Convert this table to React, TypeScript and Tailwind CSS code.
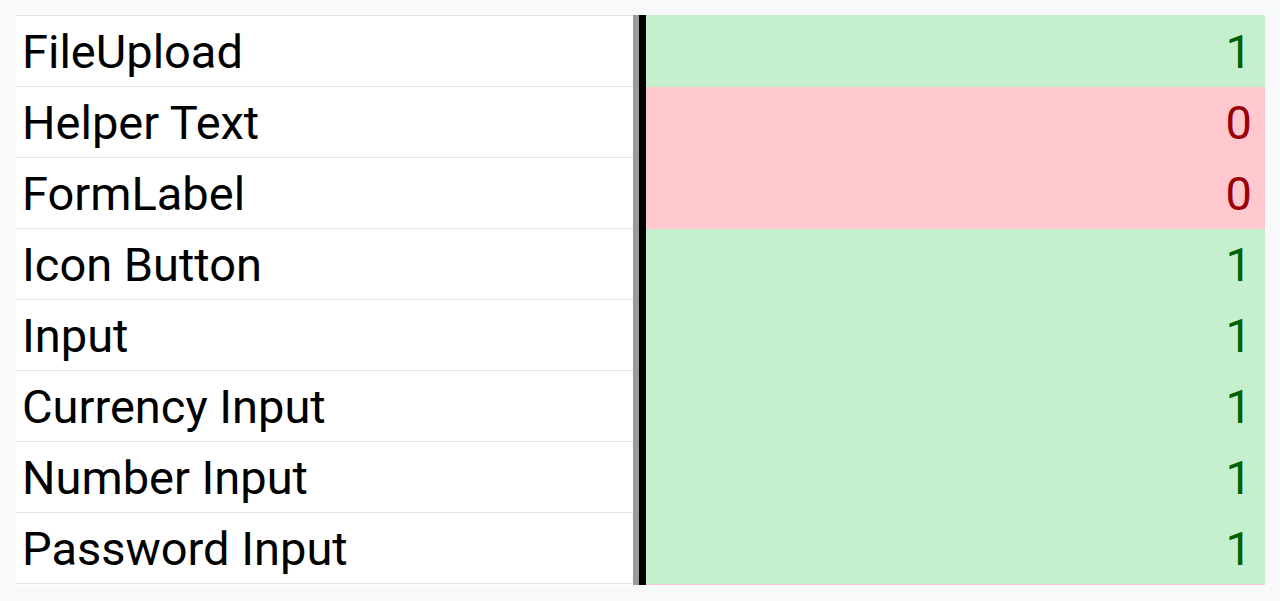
import React from "react";

const rows = [
  { name: "FileUpload", value: 1 },
  { name: "Helper Text", value: 0 },
  { name: "FormLabel", value: 0 },
  { name: "Icon Button", value: 1 },
  { name: "Input", value: 1 },
  { name: "Currency Input", value: 1 },
  { name: "Number Input", value: 1 },
  { name: "Password Input", value: 1 },
];

const App = () => {
  return (
    <div className="w-[1280px] h-[601px] bg-[#f8f9fb] pt-[15px] pl-4 font-['Roboto',sans-serif]">
      <div className="flex w-[1249px]">
        <div className="w-[617px] bg-white border-t border-[#e3e3e3]">
          {rows.map((r) => (
            <div
              key={r.name}
              className="h-[71px] border-b border-[#e3e3e3] flex items-center pl-[6px] text-[47px] leading-none text-black"
            >
              {r.name}
            </div>
          ))}
        </div>
        <div className="w-[6px] bg-[#9a9a9a]" />
        <div className="w-[7px] bg-black" />
        <div className="flex-1 border-b border-[#f5c9cd]">
          {rows.map((r, i) => (
            <div
              key={i}
              className={
                r.value
                  ? "h-[71px] first:h-[72px] flex items-center justify-end pr-[13px] text-[47px] leading-none bg-[#c6efce] text-[#006100]"
                  : "h-[71px] flex items-center justify-end pr-[13px] text-[47px] leading-none bg-[#ffc7ce] text-[#9c0006]"
              }
            >
              {r.value}
            </div>
          ))}
        </div>
      </div>
    </div>
  );
};

export default App;
